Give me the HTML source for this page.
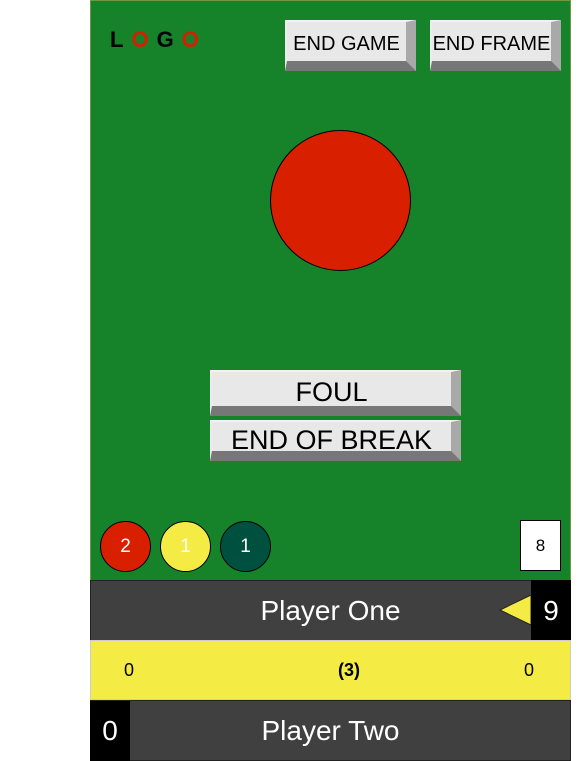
<!DOCTYPE html>
<html><head><style>
body{margin:0;width:581px;height:761px;background:#fff;position:relative;overflow:hidden;font-family:"Liberation Sans",sans-serif}
.a{position:absolute;box-sizing:border-box}
.btn{position:absolute;box-sizing:border-box;background:#e8e8e8;border-style:solid;border-color:#f2f2f2 #a9a9a9 #777 #ececec;display:flex;align-items:center;justify-content:center;color:#000}
.ball{position:absolute;border-radius:50%;border:1px solid #000;box-sizing:border-box;display:flex;align-items:center;justify-content:center;color:#fff;font-size:19px}
</style></head><body>
<div class="a" style="left:90px;top:0;width:481px;height:581px;background:#16822a;border:1px solid #6f9a3a"></div>
<div class="a" style="left:110px;top:28px;font-size:22px;font-weight:bold;letter-spacing:8px;line-height:24px"><span style="color:#000">L</span><span style="color:#d42000">O</span><span style="color:#000">G</span><span style="color:#d42000">O</span></div>
<div class="btn" style="left:285px;top:20px;width:131px;height:51px;border-width:2px 10px 10px 2px;font-size:20px;padding-top:5px">END GAME</div>
<div class="btn" style="left:430px;top:20px;width:131px;height:51px;border-width:2px 10px 10px 2px;font-size:20px;padding-top:5px">END FRAME</div>
<div class="a" style="left:270px;top:130px;width:141px;height:141px;border-radius:50%;background:#d81f00;border:1px solid #000"></div>
<div class="btn" style="left:210px;top:370px;width:251px;height:46px;border-width:2px 10px 10px 2px;font-size:27px;padding-top:7px">FOUL</div>
<div class="btn" style="left:210px;top:420px;width:251px;height:41px;border-width:2px 10px 10px 2px;font-size:27px;padding-top:7px">END OF BREAK</div>
<div class="ball" style="left:100px;top:521px;width:51px;height:51px;background:#d81f00">2</div>
<div class="ball" style="left:160px;top:521px;width:51px;height:51px;background:#f5eb45">1</div>
<div class="ball" style="left:220px;top:521px;width:51px;height:51px;background:#005040">1</div>
<div class="a" style="left:520px;top:520px;width:41px;height:51px;background:#fff;border:1px solid #000;display:flex;align-items:center;justify-content:center;font-size:17px">8</div>
<div class="a" style="left:90px;top:580px;width:481px;height:61px;background:#404040;border:1px solid #222;color:#fff;font-size:28px;display:flex;align-items:center;justify-content:center">Player One</div>
<svg class="a" style="left:498px;top:593px" width="34" height="34"><polygon points="2,17 33,2 33,32" fill="#f5eb45" stroke="#222" stroke-width="1"/></svg>
<div class="a" style="left:531px;top:580px;width:40px;height:61px;background:#000;color:#fff;font-size:28px;display:flex;align-items:center;justify-content:center">9</div>
<div class="a" style="left:90px;top:640px;width:481px;height:60px;background:#f5eb45;border:1px solid #ccc"></div>
<div class="a" style="left:124px;top:660px;font-size:18px">0</div>
<div class="a" style="left:338px;top:660px;font-size:18px;font-weight:bold">(3)</div>
<div class="a" style="left:524px;top:660px;font-size:18px">0</div>
<div class="a" style="left:90px;top:700px;width:481px;height:61px;background:#404040;border:1px solid #222;color:#fff;font-size:28px;display:flex;align-items:center;justify-content:center">Player Two</div>
<div class="a" style="left:90px;top:701px;width:40px;height:60px;background:#000;color:#fff;font-size:28px;display:flex;align-items:center;justify-content:center">0</div>
</body></html>
